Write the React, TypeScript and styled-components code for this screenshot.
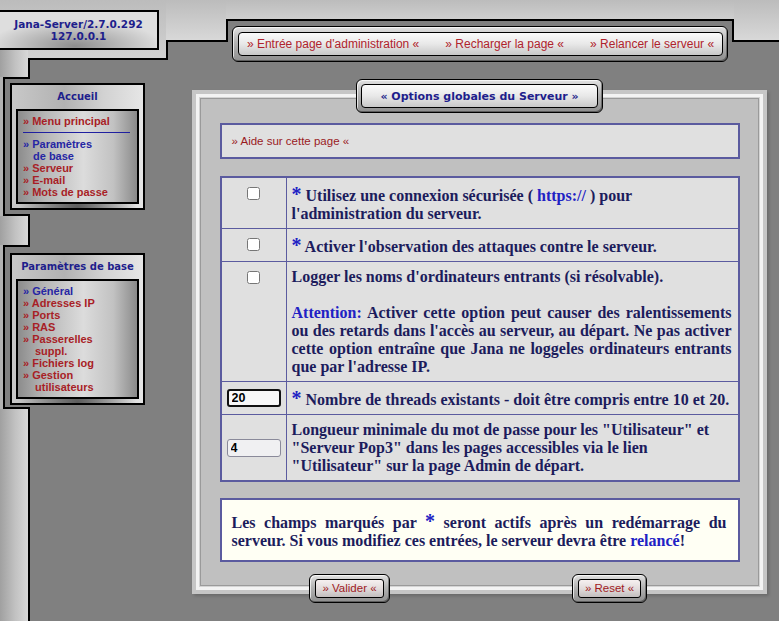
import React from "react";
import styled, { createGlobalStyle, css } from "styled-components";

const SANS = `"Liberation Sans", Arial, sans-serif`;
const SERIF = `"Liberation Serif", "Times New Roman", serif`;
const VERDANA = `"DejaVu Sans", Verdana, sans-serif`;

const NAVY = "#1e1e8c";
const RED = "#a81e26";
const BLUE_LINK = "#2626a4";
const INK = "#1c1c5c";
const ACCENT = "#2121c4";
const RULE = "#5b5b9f";
const BAND = "linear-gradient(180deg, #bcbcbc 0%, #d8d8d8 100%)";
const STRIPE = "linear-gradient(90deg, #a0a0a0 0%, #c2c2c2 55%, #d8d8d8 100%)";

const GlobalStyle = createGlobalStyle`
  *, *::before, *::after { box-sizing: border-box; }
  html, body { margin: 0; padding: 0; background: #808080; }
  body { font-family: ${SANS}; }
`;

const ringCss = css`
  border: 1px solid #000;
  border-radius: 6px;
  background: linear-gradient(180deg, #e2e2e2 0%, #b4b4b4 45%, #8e8e8e 100%);
  box-shadow: inset 1px 1px 0 rgba(255, 255, 255, 0.7), inset -1px -1px 0 rgba(0, 0, 0, 0.35);
`;

const faceCss = css`
  border: 1px solid #000;
  border-radius: 4px;
  background: linear-gradient(180deg, #fbfbfb 0%, #e8e8e8 50%, #c8c8c8 100%);
`;

const Page = styled.div`
  min-height: 100vh;
  display: flex;
  flex-direction: column;
`;

/* ---------- header ---------- */

const HeaderRow = styled.header`
  display: flex;
  align-items: flex-start;
  height: 60px;
`;

const BrandZone = styled.div`
  align-self: stretch;
  width: 168px;
  flex-shrink: 0;
  padding-top: 10px;
  border-right: 2px solid #000;
  background:
    linear-gradient(#000, #000) 28px 100% / calc(100% - 28px) 2px no-repeat,
    ${STRIPE} 0 100% / 28px 10px no-repeat,
    linear-gradient(180deg, #bcbcbc 0%, #d2d2d2 100%);
`;

const BrandBox = styled.div`
  width: 159px;
  height: 40px;
  border: 2px solid #000;
  border-left: 0;
  display: flex;
  flex-direction: column;
  align-items: center;
  justify-content: center;
  font: bold 10.5px/12px ${VERDANA};
  color: ${NAVY};
  background: radial-gradient(ellipse 55% 75% at 48% 95%, #8e8e8e 0%, #c6c6c6 70%, #dedede 100%);
`;

const StepZone = styled.div`
  position: relative;
  margin-left: -2px;
  width: 62px;
  height: 42px;
  flex-shrink: 0;
  border-right: 2px solid #000;
  border-bottom: 2px solid #000;
  background: ${BAND};
`;

const NavColumn = styled.div`
  margin-left: -2px;
  margin-bottom: -2px;
  width: 508px;
  flex-shrink: 0;
  display: flex;
  flex-direction: column;
`;

const TabBand = styled.div`
  position: relative;
  height: 21px;
  border-bottom: 2px solid #000;
  background: linear-gradient(180deg, #bcbcbc 0%, #cecece 100%);
`;

const NavRing = styled.nav`
  ${ringCss};
  margin: 5px 6px 0;
  height: 36px;
  padding: 5px 4px 5px 5px;
`;

const NavFace = styled.div`
  ${faceCss};
  height: 100%;
  display: flex;
  align-items: center;
  justify-content: center;
`;

const NavLink = styled.a`
  margin: 0 13px;
  font: 12px/14px ${SANS};
  color: #b0232c;
  text-decoration: none;
  white-space: nowrap;
`;

const NavSep = styled.span`
  width: 1px;
  height: 16px;
  background: #4848a8;
`;

const RightZone = styled.div`
  margin-left: -2px;
  flex: 1;
  height: 42px;
  border-left: 2px solid #000;
  border-bottom: 2px solid #000;
  background: ${BAND};
`;

/* ---------- body ---------- */

const Body = styled.div`
  flex: 1;
  display: flex;
`;

const LeftRail = styled.aside`
  width: 192px;
  flex-shrink: 0;
  display: flex;
  flex-direction: column;
`;

const StripeSeg = styled.div<{ $h?: number }>`
  width: 30px;
  border-right: 2px solid #000;
  background: ${STRIPE};
  ${(p) => (p.$h ? `height: ${p.$h}px;` : "flex: 1;")}
`;

const MenuNotch = styled.section<{ $top: number; $bottom: number }>`
  display: flex;
  align-items: flex-start;
  padding: ${(p) => p.$top}px 0 ${(p) => p.$bottom}px 10px;
  background:
    linear-gradient(#000, #000) 3px 0 / 27px 2px no-repeat,
    linear-gradient(#000, #000) 3px 100% / 27px 2px no-repeat,
    linear-gradient(90deg, #b2b2b2 0 3px, #000 3px 5px, transparent 5px) 0 0 / 5px 100% no-repeat;
`;

const MenuBox = styled.div`
  width: 135px;
  border: 2px solid #000;
  padding: 0 4px 4px;
  display: flex;
  flex-direction: column;
  background:
    radial-gradient(ellipse 45% 40% at 50% 100%, #5c5c5c 0%, rgba(92, 92, 92, 0) 100%),
    linear-gradient(90deg, #c8c8c8 0%, #b2b2b2 40%, #d2d2d2 70%, #e6e6e6 100%);
`;

const MenuTitle = styled.h3`
  margin: 0;
  height: 24px;
  display: flex;
  align-items: center;
  justify-content: center;
  font: bold 10px/12px ${VERDANA};
  color: ${NAVY};
`;

const MenuInner = styled.div`
  border: 2px solid #000;
  padding: 4px 7px 4px 5px;
  background: linear-gradient(90deg, #8c8c8c 0%, #b6b6b6 22%, #dcdcdc 55%, #c2c2c2 80%, #8a8a8a 100%);
`;

const MenuLink = styled.a<{ $blue?: boolean; $indent?: number }>`
  display: block;
  padding-left: ${(p) => p.$indent ?? 0}px;
  font: bold 11px/12px ${SANS};
  color: ${(p) => (p.$blue ? BLUE_LINK : RED)};
  text-decoration: none;
  white-space: nowrap;
`;

const MenuRule = styled.hr`
  margin: 5px 0;
  border: 0;
  height: 1px;
  background: #2020a0;
`;

const Main = styled.main`
  flex: 1;
  padding-top: 19px;
  display: flex;
  flex-direction: column;
`;

const PanelWrap = styled.div`
  width: 575px;
  display: flex;
  flex-direction: column;
  align-items: center;
`;

const TitleRing = styled.div`
  ${ringCss};
  position: relative;
  z-index: 1;
  margin-bottom: -23px;
  padding: 4px;
`;

const TitleFace = styled.h1`
  ${faceCss};
  margin: 0;
  height: 24px;
  padding: 0 18px;
  display: flex;
  align-items: center;
  font: bold 11px/13px ${VERDANA};
  color: ${NAVY};
  white-space: nowrap;
`;

const Panel = styled.form`
  align-self: stretch;
  margin: 0;
  border: 4px solid #c6c6c6;
  padding: 29px 0 0;
  background: #c0c0c0;
  box-shadow:
    inset 0 0 0 3px #f3f3f3,
    inset 0 0 0 4px #d4d4d4,
    inset 0 0 0 5px #9a9a9a,
    2px 2px 3px rgba(0, 0, 0, 0.18);
`;

const Content = styled.div`
  width: 520px;
  margin: 0 auto;
  display: flex;
  flex-direction: column;
`;

const AideBox = styled.div`
  height: 36px;
  border: 2px solid ${RULE};
  background: #e0e0e0;
  display: flex;
  align-items: center;
  padding-left: 10px;
`;

const AideLink = styled.a`
  font: 11.5px/14px ${SANS};
  color: #9a1a1e;
  text-decoration: none;
`;

const OptionsTable = styled.div`
  margin-top: 17px;
  border: 2px solid ${RULE};
  background: #e0e0e0;
`;

const OptionRow = styled.div`
  display: grid;
  grid-template-columns: 65px 1fr;
  & + & {
    border-top: 1px solid ${RULE};
  }
`;

const ControlCell = styled.div<{ $field?: boolean }>`
  border-right: 1px solid ${RULE};
  display: flex;
  padding: 6px 5px;
  justify-content: ${(p) => (p.$field ? "flex-start" : "center")};
  align-items: ${(p) => (p.$field ? "center" : "flex-start")};
`;

const Check = styled.input`
  width: 13px;
  height: 13px;
  margin: 3px;
`;

const NumberField = styled.input<{ $focused?: boolean }>`
  width: 54px;
  height: 18px;
  margin: 0;
  padding: 0 3px;
  font: bold 12.5px ${SANS};
  color: #000;
  background: ${(p) => (p.$focused ? "#f8f8f8" : "#f0f0f2")};
  border: ${(p) => (p.$focused ? "2px solid #111" : "1px solid #8a8a9a")};
  border-radius: 3px;
  outline: none;
`;

const proseCss = css`
  font: bold 16px/18px ${SERIF};
  color: ${INK};
`;

const TextCell = styled.div<{ $justify?: boolean }>`
  ${proseCss};
  padding: 6px 6px 5px 5px;
  text-align: ${(p) => (p.$justify ? "justify" : "left")};
`;

const Star = styled.span`
  font-size: 20px;
  line-height: 1;
  color: ${ACCENT};
`;

const Accent = styled.span`
  color: ${ACCENT};
`;

const NoteBox = styled.div`
  ${proseCss};
  margin-top: 16px;
  border: 2px solid ${RULE};
  background: #fffff4;
  padding: 11px 11px 10px 10px;
  text-align: justify;
`;

const ButtonRow = styled.div`
  display: grid;
  grid-template-columns: 1fr 1fr;
  justify-items: center;
  margin-top: 12px;
  margin-bottom: -13px;
`;

const ButtonRing = styled.div`
  ${ringCss};
  padding: 3px 5px 4px;
`;

const FaceButton = styled.button`
  ${faceCss};
  border-radius: 3px;
  height: 19px;
  padding: 0 6px;
  font: 11.5px/15px ${SANS};
  color: #a01a1e;
  background: linear-gradient(180deg, #f6f0f0 0%, #e2dcdc 50%, #c2bebe 100%);
  cursor: pointer;
`;

type MenuItem = { label: string; blue?: boolean; cont?: string; indent?: number };

const homeMenu: MenuItem[] = [
  { label: "» Paramètres", blue: true, cont: "de base", indent: 10 },
  { label: "» Serveur" },
  { label: "» E-mail" },
  { label: "» Mots de passe" },
];

const baseMenu: MenuItem[] = [
  { label: "» Général", blue: true },
  { label: "» Adresses IP" },
  { label: "» Ports" },
  { label: "» RAS" },
  { label: "» Passerelles", cont: "suppl.", indent: 12 },
  { label: "» Fichiers log" },
  { label: "» Gestion", cont: "utilisateurs", indent: 12 },
];

function MenuLinks({ items }: { items: MenuItem[] }) {
  return (
    <>
      {items.map((it) => (
        <React.Fragment key={it.label}>
          <MenuLink href="#" $blue={it.blue}>
            {it.label}
          </MenuLink>
          {it.cont && (
            <MenuLink href="#" $blue={it.blue} $indent={it.indent}>
              {it.cont}
            </MenuLink>
          )}
        </React.Fragment>
      ))}
    </>
  );
}

export default function App() {
  return (
    <Page>
      <GlobalStyle />
      <HeaderRow>
        <BrandZone>
          <BrandBox>
            <span>Jana-Server/2.7.0.292</span>
            <span>127.0.0.1</span>
          </BrandBox>
        </BrandZone>
        <StepZone />
        <NavColumn>
          <TabBand />
          <NavRing>
            <NavFace>
              <NavLink href="#">» Entrée page d'administration «</NavLink>
              <NavSep />
              <NavLink href="#">» Recharger la page «</NavLink>
              <NavSep />
              <NavLink href="#">» Relancer le serveur «</NavLink>
            </NavFace>
          </NavRing>
        </NavColumn>
        <RightZone />
      </HeaderRow>

      <Body>
        <LeftRail>
          <StripeSeg $h={17} />
          <MenuNotch $top={6} $bottom={6}>
            <MenuBox>
              <MenuTitle>Accueil</MenuTitle>
              <MenuInner>
                <MenuLink href="#">» Menu principal</MenuLink>
                <MenuRule />
                <MenuLinks items={homeMenu} />
              </MenuInner>
            </MenuBox>
          </MenuNotch>
          <StripeSeg $h={29} />
          <MenuNotch $top={8} $bottom={4}>
            <MenuBox>
              <MenuTitle>Paramètres de base</MenuTitle>
              <MenuInner>
                <MenuLinks items={baseMenu} />
              </MenuInner>
            </MenuBox>
          </MenuNotch>
          <StripeSeg />
        </LeftRail>

        <Main>
          <PanelWrap>
            <TitleRing>
              <TitleFace>« Options globales du Serveur »</TitleFace>
            </TitleRing>
            <Panel onSubmit={(e) => e.preventDefault()}>
              <Content>
                <AideBox>
                  <AideLink href="#">» Aide sur cette page «</AideLink>
                </AideBox>

                <OptionsTable>
                  <OptionRow>
                    <ControlCell>
                      <Check type="checkbox" />
                    </ControlCell>
                    <TextCell>
                      <Star>*</Star> Utilisez une connexion sécurisée ( <Accent>https://</Accent> ) pour
                      l'administration du serveur.
                    </TextCell>
                  </OptionRow>
                  <OptionRow>
                    <ControlCell>
                      <Check type="checkbox" />
                    </ControlCell>
                    <TextCell>
                      <Star>*</Star> Activer l'observation des attaques contre le serveur.
                    </TextCell>
                  </OptionRow>
                  <OptionRow>
                    <ControlCell>
                      <Check type="checkbox" />
                    </ControlCell>
                    <TextCell $justify>
                      Logger les noms d'ordinateurs entrants (si résolvable).
                      <br />
                      <br />
                      <Accent>Attention:</Accent> Activer cette option peut causer des ralentissements ou
                      des retards dans l'accès au serveur, au départ. Ne pas activer cette option entraîne
                      que Jana ne loggeles ordinateurs entrants que par l'adresse IP.
                    </TextCell>
                  </OptionRow>
                  <OptionRow>
                    <ControlCell $field>
                      <NumberField type="text" defaultValue="20" $focused />
                    </ControlCell>
                    <TextCell>
                      <Star>*</Star> Nombre de threads existants - doit être compris entre 10 et 20.
                    </TextCell>
                  </OptionRow>
                  <OptionRow>
                    <ControlCell $field>
                      <NumberField type="text" defaultValue="4" />
                    </ControlCell>
                    <TextCell>
                      Longueur minimale du mot de passe pour les "Utilisateur" et "Serveur Pop3" dans les
                      pages accessibles via le lien "Utilisateur" sur la page Admin de départ.
                    </TextCell>
                  </OptionRow>
                </OptionsTable>

                <NoteBox>
                  Les champs marqués par <Star>*</Star> seront actifs après un redémarrage du serveur. Si
                  vous modifiez ces entrées, le serveur devra être <Accent>relancé</Accent>!
                </NoteBox>

                <ButtonRow>
                  <ButtonRing>
                    <FaceButton type="submit">» Valider «</FaceButton>
                  </ButtonRing>
                  <ButtonRing>
                    <FaceButton type="reset">» Reset «</FaceButton>
                  </ButtonRing>
                </ButtonRow>
              </Content>
            </Panel>
          </PanelWrap>
        </Main>
      </Body>
    </Page>
  );
}
